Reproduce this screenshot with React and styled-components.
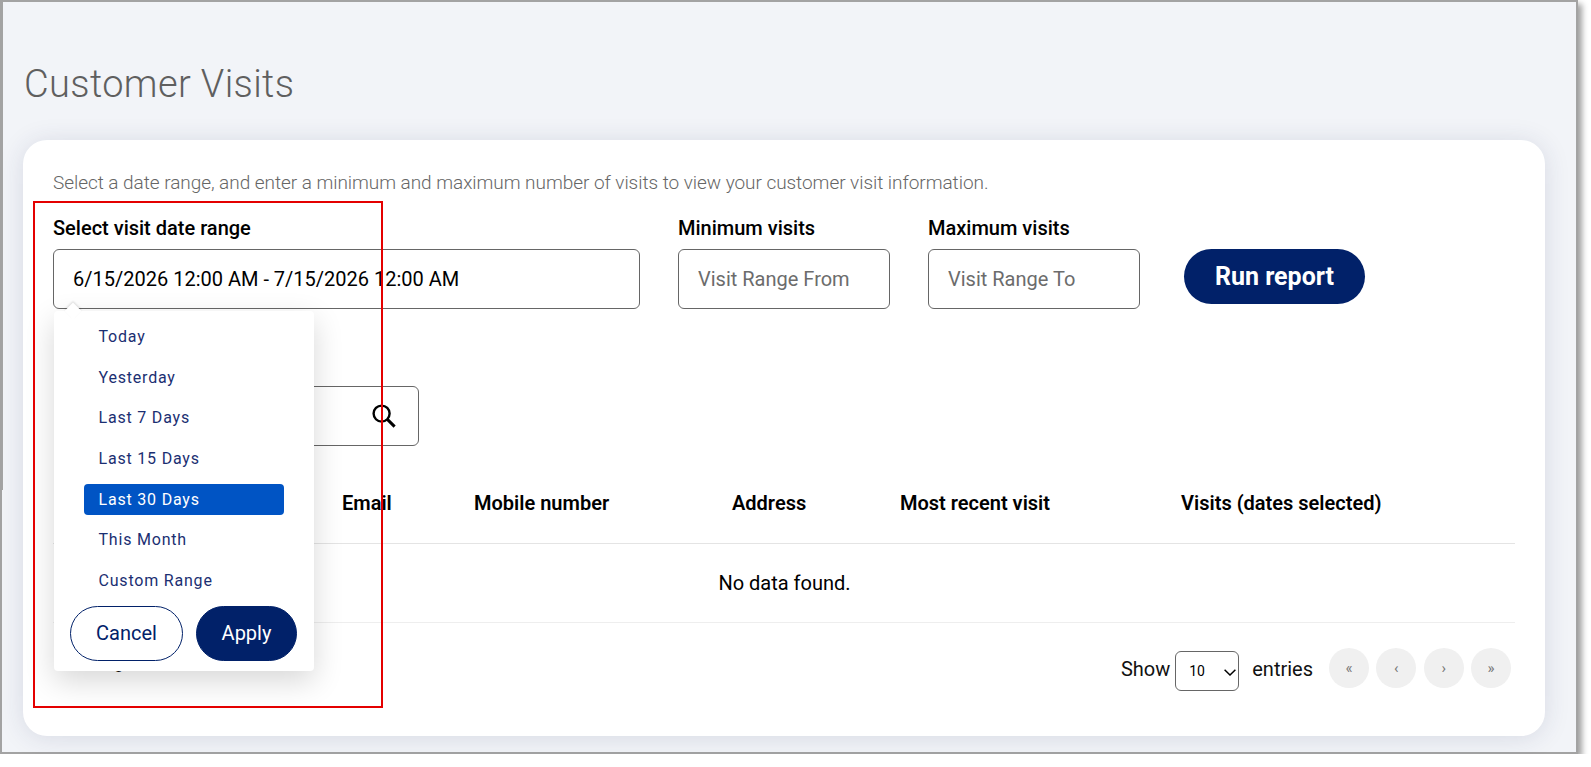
import React from "react";
import styled, { createGlobalStyle } from "styled-components";

const GlobalStyle = createGlobalStyle`
	html, body {
		margin: 0;
		padding: 0;
		background: #fff;
		font-family: "Roboto", "Liberation Sans", sans-serif;
		overflow: hidden;
	}
	* {
		box-sizing: border-box;
	}
`;

const RANGES = [
	"Today",
	"Yesterday",
	"Last 7 Days",
	"Last 15 Days",
	"Last 30 Days",
	"This Month",
	"Custom Range",
];

const SearchIcon = () => (
	<svg width="24" height="24" viewBox="0 0 24 24" fill="none" stroke="#000">
		<circle cx="9.6" cy="9.6" r="8" strokeWidth="2.4" />
		<path d="M15.4 15.4 22.6 22.6" strokeWidth="3" />
	</svg>
);

const Chevron = () => (
	<svg width="12" height="7" viewBox="0 0 12 7" fill="none" stroke="#000" strokeWidth="1.5">
		<path d="M.6.8 6 6 11.4.8" />
	</svg>
);

const App = () => {
	return (
		<>
			<GlobalStyle />
			<Frame>
				<Title>Customer Visits</Title>
				<Card>
					<Intro>
						Select a date range, and enter a minimum and maximum number of
						visits to view your customer visit information.
					</Intro>
					<FilterRow>
						<Field width="587px">
							<Label>Select visit date range</Label>
							<Input readOnly value="6/15/2026 12:00 AM - 7/15/2026 12:00 AM" />
						</Field>
						<Field width="212px">
							<Label>Minimum visits</Label>
							<Input placeholder="Visit Range From" />
						</Field>
						<Field width="212px">
							<Label>Maximum visits</Label>
							<Input placeholder="Visit Range To" />
						</Field>
						<RunButton>Run report</RunButton>
					</FilterRow>
					<SearchBox>
						<SearchInput />
						<SearchIcon />
					</SearchBox>
					<HeadRow>
						<span />
						<span>Email</span>
						<span>Mobile number</span>
						<span>Address</span>
						<span>Most recent visit</span>
						<span>Visits (dates selected)</span>
					</HeadRow>
					<EmptyRow>No data found.</EmptyRow>
					<Footer>
						<Summary>Showing 0 to 0 of 0 entries</Summary>
						<FooterRight>
							<EntriesLabel>
								Show
								<SelectWrap>
									<PageSize defaultValue="10">
										<option>10</option>
										<option>25</option>
										<option>50</option>
									</PageSize>
									<Chevron />
								</SelectWrap>
								entries
							</EntriesLabel>
							<Pager>
								<PageButton>«</PageButton>
								<PageButton>‹</PageButton>
								<PageButton>›</PageButton>
								<PageButton>»</PageButton>
							</Pager>
						</FooterRight>
					</Footer>
				</Card>
				<Dropdown>
					<RangeList>
						{RANGES.map((range) => (
							<RangeItem key={range} $active={range === "Last 30 Days"}>
								{range}
							</RangeItem>
						))}
					</RangeList>
					<DropdownActions>
						<CancelButton>Cancel</CancelButton>
						<ApplyButton>Apply</ApplyButton>
					</DropdownActions>
				</Dropdown>
				<Highlight />
			</Frame>
		</>
	);
};

export default App;

const Frame = styled.div`
	position: relative;
	width: 1578px;
	height: 754px;
	padding: 0 0 0 21px;
	background: #f2f4f8;
	border: solid #a3a3a3;
	border-width: 2px 2px 2px 2px;
	box-shadow: 4px 4px 6px rgba(0, 0, 0, 0.38);

	&::after {
		content: "";
		position: absolute;
		left: 0;
		top: 0;
		width: 1px;
		height: 488px;
		background: #a3a3a3;
	}
`;

const Title = styled.h1`
	margin: 0;
	padding: 60px 0 0 1px;
	height: 138px;
	font-size: 38px;
	line-height: 44px;
	font-weight: 300;
	letter-spacing: 0.38px;
	color: #5f5f5f;
`;

const Card = styled.div`
	width: 1522px;
	height: 596px;
	padding: 0 30px;
	background: #fff;
	border-radius: 24px;
	box-shadow: 0 2px 26px rgba(40, 50, 90, 0.13);
`;

const Intro = styled.p`
	margin: 0;
	padding-top: 32px;
	font-size: 19px;
	line-height: 22px;
	font-weight: 300;
	letter-spacing: -0.05px;
	color: #666;
`;

const FilterRow = styled.div`
	display: flex;
	align-items: flex-start;
	gap: 38px;
	margin-top: 22px;
`;

const Field = styled.div`
	width: ${(props) => props.width};
	flex-shrink: 0;
`;

const Label = styled.div`
	font-size: 20px;
	line-height: 24px;
	font-weight: 500;
	color: #000;
	margin-bottom: 9px;
`;

const Input = styled.input`
	display: block;
	width: 100%;
	height: 60px;
	padding: 0 19px;
	border: 1px solid #666;
	border-radius: 6px;
	background: #fff;
	font: 400 20px "Roboto", sans-serif;
	color: #000;
	outline: none;

	&::placeholder {
		color: #6c6c6c;
		opacity: 1;
	}
`;

const RunButton = styled.button`
	width: 181px;
	height: 55px;
	margin: 33px 0 0 6px;
	border: none;
	border-radius: 28px;
	background: #012169;
	color: #fff;
	font: 700 25px "Roboto", sans-serif;
`;

const SearchBox = styled.div`
	display: flex;
	align-items: center;
	width: 346px;
	height: 60px;
	margin: 77px 0 0 20px;
	padding: 0 22px 0 19px;
	border: 1px solid #666;
	border-radius: 6px;
`;

const SearchInput = styled.input`
	flex: 1;
	min-width: 0;
	border: none;
	outline: none;
	font: 400 20px "Roboto", sans-serif;
`;

const HeadRow = styled.div`
	display: grid;
	grid-template-columns: 289px 132px 258px 168px 281px 1fr;
	align-items: center;
	height: 98px;
	padding-top: 16px;
	border-bottom: 1px solid #e4e4e4;
	font-size: 20px;
	font-weight: 600;
	color: #000;
`;

const EmptyRow = styled.div`
	height: 79px;
	display: flex;
	align-items: center;
	justify-content: center;
	border-bottom: 1px solid #eee;
	padding-left: 1px;
	font-size: 20px;
	color: #000;
`;

const Footer = styled.div`
	display: flex;
	justify-content: space-between;
	align-items: center;
	height: 90px;
	padding-right: 4px;
	font-size: 20px;
	color: #111;
`;

const Summary = styled.span`
	align-self: flex-start;
	margin: 27px 0 0 2px;
	font-size: 18px;
	line-height: 24px;
`;

const FooterRight = styled.div`
	display: flex;
	align-items: center;
	gap: 16px;
`;

const EntriesLabel = styled.label`
	display: flex;
	align-items: center;
	gap: 5px;
	margin-top: 2px;
`;

const SelectWrap = styled.span`
	position: relative;
	display: block;
	margin: 4px 8px 0 0;

	svg {
		position: absolute;
		right: 3px;
		top: 18px;
		pointer-events: none;
	}
`;

const PageSize = styled.select`
	display: block;
	width: 64px;
	height: 40px;
	padding-left: 13px;
	border: 1px solid #666;
	border-radius: 6px;
	background: #fff;
	appearance: none;
	font: 400 14px "Roboto", sans-serif;
	color: #000;
`;

const Pager = styled.div`
	display: flex;
	gap: 7.33px;
`;

const PageButton = styled.button`
	width: 40px;
	height: 40px;
	padding: 0;
	border: none;
	border-radius: 50%;
	background: #f0f0f0;
	color: #777;
	font: 400 15px "Roboto", sans-serif;
`;

const Dropdown = styled.div`
	position: absolute;
	left: 52px;
	top: 309px;
	width: 260px;
	height: 360px;
	padding: 10.2px 17px 0 16px;
	background: #fff;
	border-radius: 4px;
	box-shadow: 0 10px 30px rgba(0, 0, 0, 0.16);

	&::before {
		content: "";
		position: absolute;
		left: 13px;
		top: -6px;
		width: 12px;
		height: 12px;
		background: #fff;
		transform: rotate(45deg);
		box-shadow: -1px -1px 2px rgba(0, 0, 0, 0.12);
	}
`;

const RangeList = styled.ul`
	list-style: none;
	margin: 0 13px 0 0;
	padding: 0 0 0 14px;
	position: relative;
	display: flex;
	flex-direction: column;
	gap: 9.6px;
`;

const RangeItem = styled.li`
	height: 31px;
	padding-left: 14.5px;
	border-radius: 4px;
	font-size: 16px;
	line-height: 31px;
	letter-spacing: 0.8px;
	color: ${(props) => (props.$active ? "#fff" : "#1b2f72")};
	background: ${(props) => (props.$active ? "#0054c4" : "transparent")};
`;

const DropdownActions = styled.div`
	display: flex;
	gap: 13px;
	margin-top: 10px;
`;

const CancelButton = styled.button`
	width: 113px;
	height: 55px;
	border: 1px solid #012169;
	border-radius: 28px;
	background: #fff;
	color: #012169;
	font: 400 20px "Roboto", sans-serif;
`;

const ApplyButton = styled(CancelButton)`
	width: 101px;
	background: #012169;
	color: #fff;
`;

const Highlight = styled.div`
	position: absolute;
	left: 31px;
	top: 199px;
	width: 350px;
	height: 507px;
	border: 2px solid #e40000;
	pointer-events: none;
`;
